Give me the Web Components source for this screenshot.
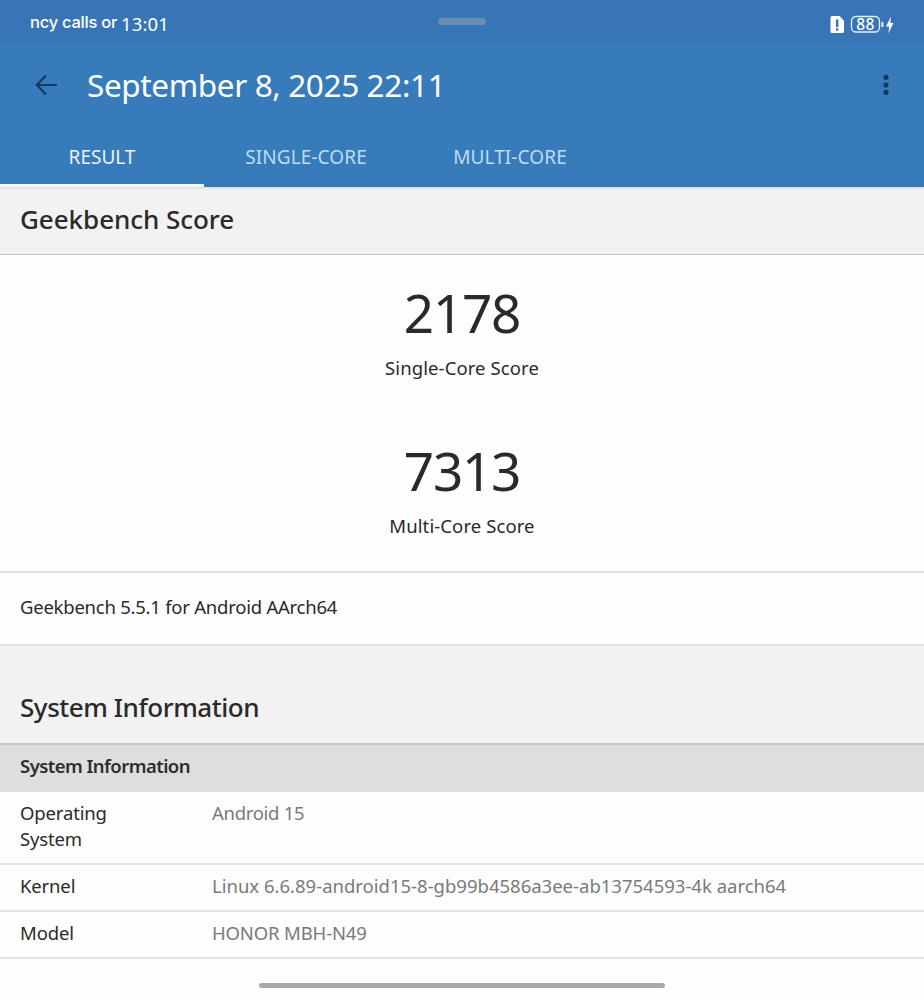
<!DOCTYPE html>
<html><head><meta charset="utf-8"><style>
html,body{margin:0;padding:0;background:#fdfdfd;}
body{width:924px;height:1000px;overflow:hidden;font-family:"Noto Sans","Open Sans",sans-serif;position:relative;}
</style></head><body>
<gb-app></gb-app>
<script>
function def(name,html,init){customElements.define(name,class extends HTMLElement{constructor(){super();this.attachShadow({mode:'open'}).innerHTML=html;if(init)init(this);}});}
def('gb-status',`<style>
:host{display:flex;height:44px;background:#3875b7;color:#fff;position:relative;align-items:center;box-sizing:border-box;padding:0 0 0 30px}
.n{font:500 16.500px/1 Inter,"Noto Sans",sans-serif;white-space:nowrap;margin-top:1px;letter-spacing:-.25px}
.t{font:400 18.500px/1 "Noto Sans",sans-serif;margin-left:4px;letter-spacing:.1px;margin-top:5px}
.pill{position:absolute;left:438px;top:18px;width:48px;height:7px;border-radius:4px;background:#6a8db3}
.r{position:absolute;left:829px;top:11px}
</style><span class="n">ncy calls or</span><span class="t">13:01</span><div class="pill"></div>
<svg class="r" width="66" height="28" viewBox="0 -4 66 28"><path d="M3 1h7.500l4.500 4.500v11a1.500 1.500 0 0 1-1.500 1.500h-10.500a1.500 1.500 0 0 1-1.500-1.500v-14a1.500 1.500 0 0 1 1.500-1.500z" fill="#fff"/><rect x="7" y="4.500" width="2.400" height="7.500" fill="#3875b7"/><rect x="7" y="13.300" width="2.400" height="2.400" fill="#3875b7"/><rect x="22.500" y="1.500" width="28" height="15.500" rx="4.500" fill="none" stroke="#e8f0f8" stroke-width="1.300"/><rect x="52.500" y="7" width="1.800" height="5" fill="#fff"/><text x="36.500" y="14.800" text-anchor="middle" font-family="Noto Sans" font-size="15.500" font-weight="500" fill="#fff" letter-spacing=".5">88</text><path d="M62 1.500l-5 10h3.300l-1 7 5.200-10.500h-3.200z" fill="#fff"/></svg>`);
def('gb-appbar',`<style>
:host{display:block;background:#387bbb;height:143px;position:relative;color:#fff}
.top{display:flex;align-items:center;height:82px;padding:0 34px 2px 35px}
svg.b{flex:none;margin-right:30px}
h1{margin:0;font:400 31.500px/1 "Noto Sans",sans-serif;flex:1;letter-spacing:-.37px}
.tabs{display:flex;height:59px}
.tab{width:204px;box-sizing:border-box;text-align:center;font:400 19px/1 "Noto Sans",sans-serif;padding-top:20px;color:#bcdcf4;height:59px;white-space:nowrap;letter-spacing:.1px}
.tab.on{color:#e8f2fa;border-bottom:3px solid #f4f7fa;letter-spacing:0}
</style><div class="top"><svg class="b" width="22" height="22" viewBox="0 0 22 22" fill="none" stroke="#103a5e" stroke-width="2.200"><path d="M22 11H2M11 1.500L1.800 11l9.200 9.500"/></svg><h1>September 8, 2025 22:11</h1>
<svg width="8" height="24" viewBox="0 0 8 24" fill="#103a5e"><circle cx="4" cy="4.300" r="2.600"/><circle cx="4" cy="12" r="2.600"/><circle cx="4" cy="19.300" r="2.600"/></svg></div>
<div class="tabs"><div class="tab on">RESULT</div><div class="tab">SINGLE-CORE</div><div class="tab">MULTI-CORE</div></div>`);
def('gb-section',`<style>
:host{display:flex;align-items:flex-end;background:#f2f2f2;box-sizing:border-box;padding:0 20px;border-bottom:1px solid #c4c4c4;color:#2a2a2a;font:500 26px/1 "Noto Sans",sans-serif}
</style><slot></slot>`);
def('gb-score',`<style>
:host{display:block;text-align:center;color:#2a2a2a}
.v{font:400 53px/1 "Noto Sans",sans-serif;height:58px;line-height:58px;letter-spacing:-1.200px}
.l{font:400 18.500px/1 "Noto Sans",sans-serif;margin-top:14px;height:23px;line-height:23px;letter-spacing:.1px}
</style><div class="v"><slot name="v"></slot></div><div class="l"><slot name="l"></slot></div>`);
def('gb-kv',`<style>
:host{display:flex;background:#fdfdfd;border-bottom:2px solid #e3e3e3;box-sizing:border-box;padding:0 20px;font:400 18.500px/26px "Noto Sans",sans-serif;color:#2a2a2a}
.k{width:192px;flex:none;padding-right:40px;box-sizing:border-box;letter-spacing:-.15px}
.v{color:#7a7a7a;white-space:nowrap}
</style><div class="k"><slot name="k"></slot></div><div class="v"><slot name="v"></slot></div>`);
def('gb-app',`<style>
:host{display:block;width:924px;height:1000px;position:relative;background:#fdfdfd}
.shadow{height:3px;background:linear-gradient(#dcdcdc,#f2f2f2)}
.h1{height:65px;padding-bottom:22px;letter-spacing:-.05px}
.scores{background:#fdfdfd;height:318px;box-sizing:border-box;padding-top:29px;display:flex;flex-direction:column;gap:63px;border-bottom:2px solid #e0e0e0}
.ver{height:73px;background:#fdfdfd;border-bottom:2px solid #dedede;box-sizing:border-box;padding:0 20px;font:400 18.500px/68px "Noto Sans",sans-serif;color:#2a2a2a;letter-spacing:-.24px}
.h2{height:99px;padding-bottom:23px;border-bottom:2px solid #c8c8c8;letter-spacing:-.45px}
.sub{height:47px;background:#dedede;font:600 18.500px/42px "Noto Sans",sans-serif;padding:0 20px;color:#2e2e2e;letter-spacing:-.55px}
.r1{height:73px;padding-top:8px}.r2{height:47px;padding-top:8px}
.a{letter-spacing:-.3px}.m{letter-spacing:-.15px}
.home{position:absolute;left:259px;top:983px;width:406px;height:5px;border-radius:3px;background:#a9a9a9}
</style><gb-status></gb-status><gb-appbar></gb-appbar><div class="shadow"></div>
<gb-section class="h1">Geekbench Score</gb-section>
<div class="scores"><gb-score><span slot="v">2178</span><span slot="l">Single-Core Score</span></gb-score><gb-score><span slot="v">7313</span><span slot="l">Multi-Core Score</span></gb-score></div>
<div class="ver">Geekbench 5.5.1 for Android AArch64</div>
<gb-section class="h2">System Information</gb-section>
<div class="sub">System Information</div>
<gb-kv class="r1"><span slot="k">Operating System</span><span slot="v" class="a">Android 15</span></gb-kv>
<gb-kv class="r2"><span slot="k">Kernel</span><span slot="v">Linux 6.6.89-android15-8-gb99b4586a3ee-ab13754593-4k aarch64</span></gb-kv>
<gb-kv class="r2"><span slot="k">Model</span><span slot="v" class="m">HONOR MBH-N49</span></gb-kv>
<div class="home"></div>`);
</script></body></html>
